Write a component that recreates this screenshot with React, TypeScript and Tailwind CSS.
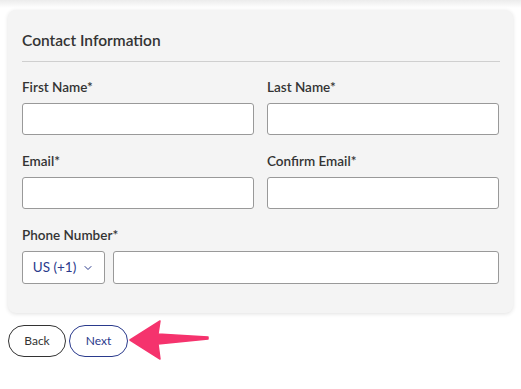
import { ChevronDown } from "lucide-react";

function Field({ label, className = "" }: { label: string; className?: string }) {
  return (
    <div className={`flex flex-col ${className}`}>
      <label className="text-[13.5px] leading-[18px] font-semibold text-[#333] mb-[7px]">{label}</label>
      <input className="h-[32px] w-full rounded-[3px] border border-[#999] bg-white outline-none" />
    </div>
  );
}

export default function App() {
  return (
    <div className="w-[521px] h-[389px] bg-white overflow-hidden font-['Lato','Noto_Sans',sans-serif]">
      <div className="h-[8px] bg-gradient-to-b from-[#ececec] to-white" />
      <div className="mx-2 mt-[2px] w-[505px] rounded-lg bg-[#f4f4f4] shadow-[0_1px_4px_rgba(0,0,0,0.12)] px-[14px] pt-[20px] pb-[29px]">
        <div className="border-b border-[#cfcfcf] pb-[11px] mr-[-1px]">
          <h2 className="text-[15.5px] leading-[20px] font-semibold text-[#333]">Contact Information</h2>
        </div>
        <div className="mt-[16px] grid grid-cols-2 gap-x-[13px] gap-y-[17px]">
          <Field label="First Name*" />
          <Field label="Last Name*" />
          <Field label="Email*" />
          <Field label="Confirm Email*" />
          <div className="col-span-2 flex flex-col">
            <label className="text-[13.5px] leading-[18px] font-semibold text-[#333] mb-[7px]">Phone Number*</label>
            <div className="flex gap-[8px]">
              <button className="h-[33px] w-[83px] shrink-0 rounded-[3px] border border-[#999] bg-white flex items-center justify-center gap-[6px] text-[13.5px] text-[#2a3a8c]">
                US (+1)
                <ChevronDown size={12} strokeWidth={2} />
              </button>
              <input className="h-[33px] flex-1 rounded-[3px] border border-[#999] bg-white outline-none" />
            </div>
          </div>
        </div>
      </div>
      <div className="relative mt-[12px] ml-2 flex gap-[3px]">
        <button className="h-[32px] w-[58px] rounded-full border border-[#333] bg-white text-[12px] text-[#333]">Back</button>
        <button className="h-[32px] w-[59px] rounded-full border border-[#2a3a8c] bg-white text-[12px] text-[#2a3a8c]">Next</button>
        <svg className="absolute left-[120px] top-[-5px]" width="84" height="42" viewBox="0 0 84 42">
          <path d="M2 20 L32 1 L30 14 L80 17 L80 19 L30 24 L32 39 Z" fill="#f5336d" stroke="#f5336d" strokeWidth="1.5" strokeLinejoin="round" />
        </svg>
      </div>
    </div>
  );
}
